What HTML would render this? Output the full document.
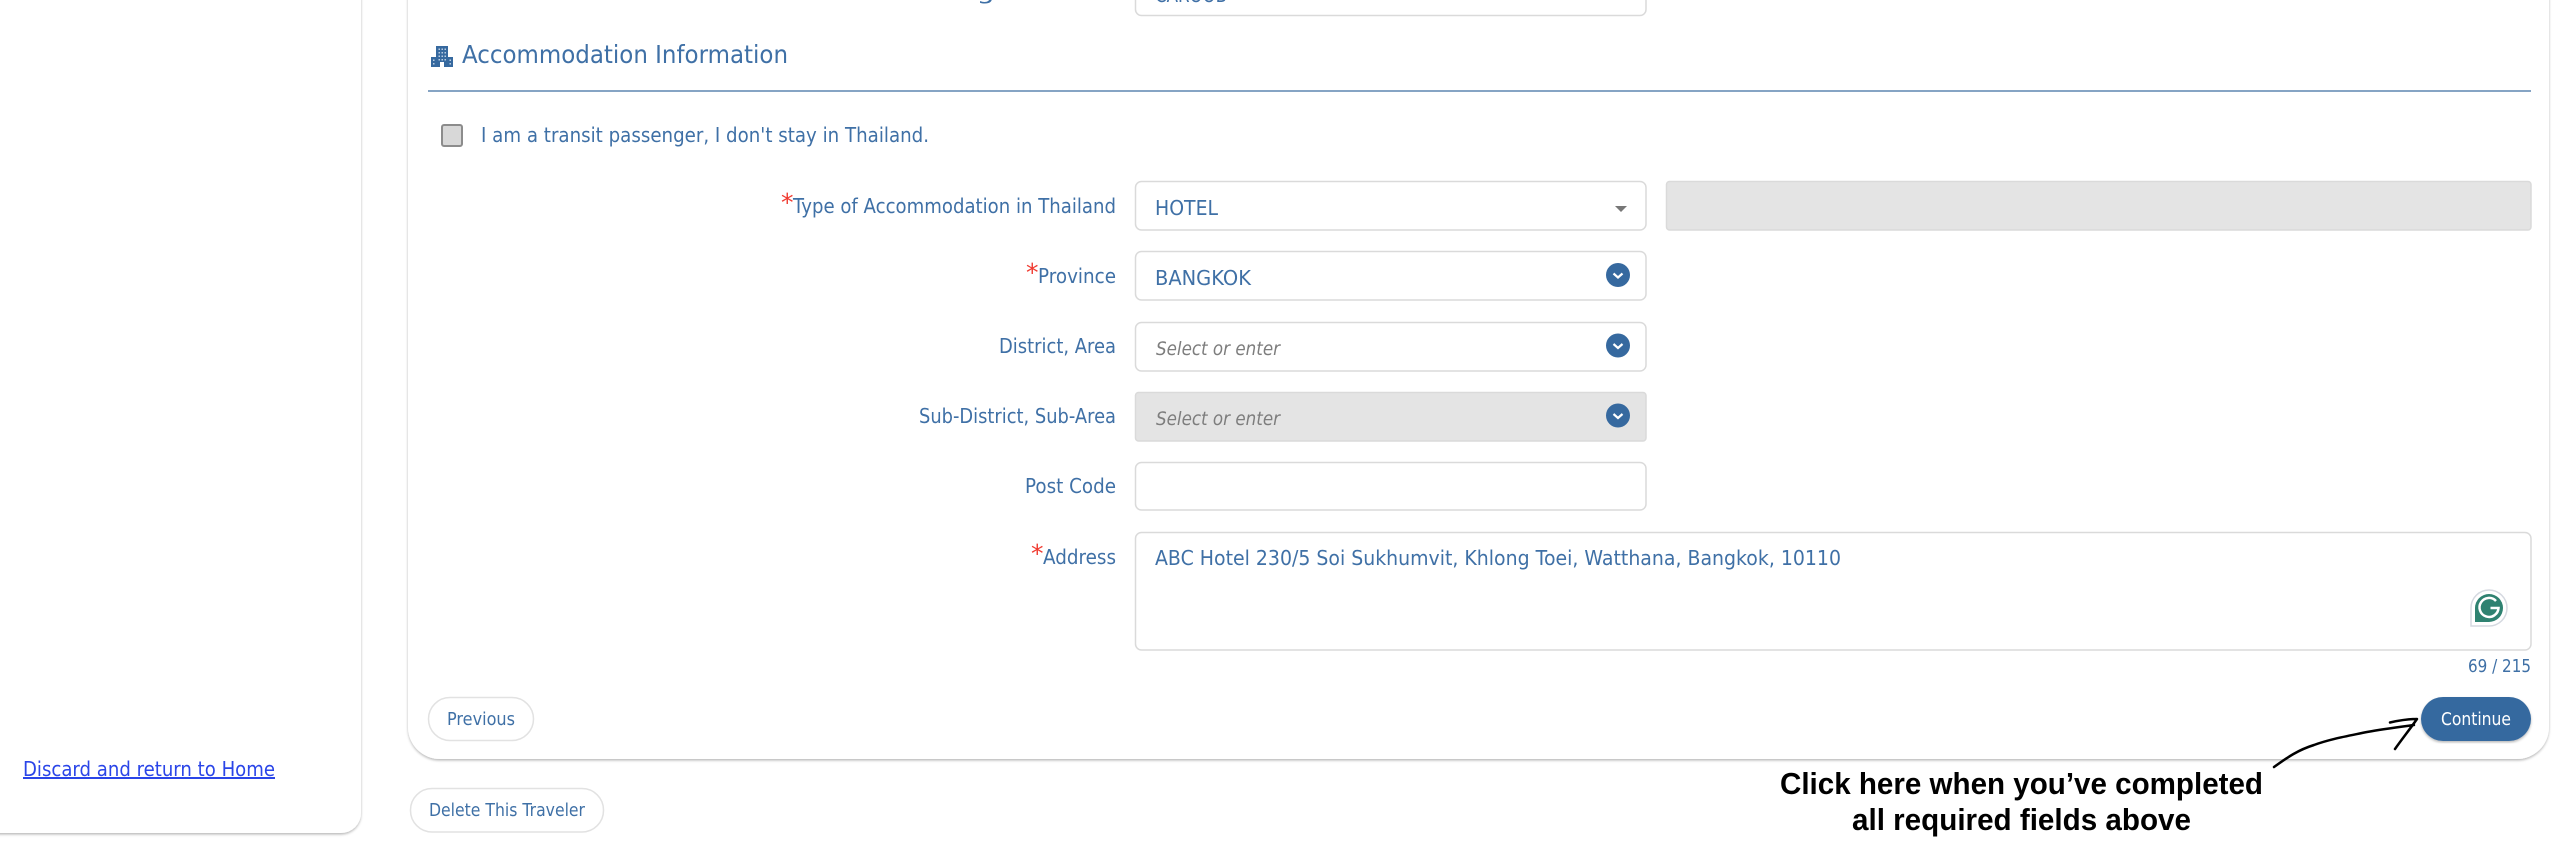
<!DOCTYPE html>
<html lang="en"><head><meta charset="utf-8"><title>Accommodation Information</title>
<style>
html,body{margin:0;padding:0;background:#fff;width:2560px;height:846px;overflow:hidden}
svg{display:block}
text{font-family:"DejaVu Sans",sans-serif;fill:#3f70a6;font-size:20px}
.b{fill:#fff;stroke:#dadada;stroke-width:1.500}
.g{fill:#e4e4e4;stroke:#dadada;stroke-width:1.500}
.s{fill:#7d7d7d;font-style:italic;font-size:19px}
.r{fill:#f03a30;font-size:25px}
.a{font-family:"Liberation Sans",Arial,sans-serif;font-weight:700;fill:#000;font-size:31px}
</style></head><body>
<svg xmlns="http://www.w3.org/2000/svg" width="2560" height="846" viewBox="0 0 2560 846">
<defs><filter id="sh" x="-5%" y="-5%" width="110%" height="110%"><feDropShadow dx="0" dy="1.500" stdDeviation="1.200" flood-color="#000" flood-opacity=".28"/></filter></defs>
<rect width="2560" height="846" fill="#fff"/>
<rect x="-40" y="-40" width="401" height="873" rx="20" fill="#fff" filter="url(#sh)"/>
<rect x="408" y="-40" width="2141" height="799" rx="32" fill="#fff" filter="url(#sh)"/>

<text x="943" y="-1" textLength="173" lengthAdjust="spacingAndGlyphs">ling Address</text>
<rect x="1135.500" y="-20" width="510.500" height="35.500" rx="6" class="b"/>
<text x="1155" y="2" textLength="72" lengthAdjust="spacingAndGlyphs">CAROOB</text>

<path fill="#36699f" d="M431 57h5V46h12v11h5v10h-9v-5h-4v5h-9z"/>
<path fill="#b9cde2" d="M438.500 48.500h1.500v1.500h-1.500zM441.500 48.500h1.500v1.500h-1.500zM444.500 48.500h1.500v1.500h-1.500zM438.500 52h1.500v1.500h-1.500zM441.500 52h1.500v1.500h-1.500zM444.500 52h1.500v1.500h-1.500zM438.500 55.500h1.500v1.500h-1.500zM441.500 55.500h1.500v1.500h-1.500zM444.500 55.500h1.500v1.500h-1.500zM438.500 59h1.500v1.500h-1.500zM441.500 59h1.500v1.500h-1.500zM444.500 59h1.500v1.500h-1.500zM433 59.500h1.500v1.500h-1.500zM433 63h1.500v1.500h-1.500zM449.500 59.500h1.500v1.500h-1.500zM449.500 63h1.500v1.500h-1.500z"/>
<text x="462" y="63" style="font-size:25px" textLength="326" lengthAdjust="spacingAndGlyphs">Accommodation Information</text>
<rect x="428" y="90" width="2103" height="2" fill="#86a4c4"/>

<rect x="442" y="125" width="20" height="21" rx="2" fill="#d8d8d8" stroke="#8c8c8c" stroke-width="2"/>
<text x="481" y="142" textLength="448" lengthAdjust="spacingAndGlyphs">I am a transit passenger, I don't stay in Thailand.</text>

<text class="r" x="781" y="211">*</text>
<text x="793" y="213" textLength="323" lengthAdjust="spacingAndGlyphs">Type of Accommodation in Thailand</text>
<rect x="1135.500" y="181.500" width="510.500" height="48.500" rx="6" class="b"/>
<text x="1155" y="215" textLength="63" lengthAdjust="spacingAndGlyphs">HOTEL</text>
<path d="M1615 206h12l-6 6z" fill="#777"/>
<rect x="1666.500" y="181.500" width="864.500" height="48.500" rx="3" class="g"/>

<text class="r" x="1026" y="281">*</text>
<text x="1038" y="283" textLength="78" lengthAdjust="spacingAndGlyphs">Province</text>
<rect x="1135.500" y="251.500" width="510.500" height="48.500" rx="6" class="b"/>
<text x="1155" y="285" textLength="96" lengthAdjust="spacingAndGlyphs">BANGKOK</text>
<circle cx="1618" cy="275" r="12" fill="#36699f"/><path d="M1613.500 273.500l4.500 4 4.500-4" fill="none" stroke="#fff" stroke-width="2.200"/>

<text x="999" y="353" textLength="117" lengthAdjust="spacingAndGlyphs">District, Area</text>
<rect x="1135.500" y="322.500" width="510.500" height="48.500" rx="6" class="b"/>
<text class="s" x="1156" y="355" textLength="124" lengthAdjust="spacingAndGlyphs">Select or enter</text>
<circle cx="1618" cy="345.500" r="12" fill="#36699f"/><path d="M1613.500 344l4.500 4 4.500-4" fill="none" stroke="#fff" stroke-width="2.200"/>

<text x="919" y="423" textLength="197" lengthAdjust="spacingAndGlyphs">Sub-District, Sub-Area</text>
<rect x="1135.500" y="392.500" width="510.500" height="48.500" rx="3" class="g"/>
<text class="s" x="1156" y="425" textLength="124" lengthAdjust="spacingAndGlyphs">Select or enter</text>
<circle cx="1618" cy="415.500" r="12" fill="#36699f"/><path d="M1613.500 414l4.500 4 4.500-4" fill="none" stroke="#fff" stroke-width="2.200"/>

<text x="1025" y="493" textLength="91" lengthAdjust="spacingAndGlyphs">Post Code</text>
<rect x="1135.500" y="462.500" width="510.500" height="47.500" rx="6" class="b"/>

<text class="r" x="1031" y="562">*</text>
<text x="1043" y="564" textLength="73" lengthAdjust="spacingAndGlyphs">Address</text>
<rect x="1135.500" y="532.500" width="1395.500" height="117.500" rx="6" class="b"/>
<text x="1155" y="565" textLength="686" lengthAdjust="spacingAndGlyphs">ABC Hotel 230/5 Soi Sukhumvit, Khlong Toei, Watthana, Bangkok, 10110</text>

<path d="M2471 626v-18a18 18 0 1 1 18 18z" fill="#fff" stroke="#d5d9e0" stroke-width="1.500"/>
<path d="M2475 622v-14a14 14 0 1 1 14 14z" fill="#2f8271"/>
<path d="M2496 601a9.500 9.500 0 1 0 2.500 7h-8" fill="none" stroke="#fff" stroke-width="2.500"/>

<text x="2468" y="672" style="font-size:18px" textLength="63" lengthAdjust="spacingAndGlyphs">69 / 215</text>

<rect x="428.500" y="697.500" width="105" height="43" rx="21.500" class="b" style="stroke:#e2e2e2"/>
<text x="447" y="725" style="font-size:18px" textLength="68" lengthAdjust="spacingAndGlyphs">Previous</text>
<rect x="2421" y="697" width="110" height="44" rx="22" fill="#36699f" filter="url(#sh)"/>
<text x="2441" y="725" style="font-size:18px;fill:#fff" textLength="70" lengthAdjust="spacingAndGlyphs">Continue</text>

<rect x="410.500" y="788.500" width="193" height="43.500" rx="21.500" class="b" style="stroke:#e2e2e2"/>
<text x="429" y="816" style="font-size:18px" textLength="156" lengthAdjust="spacingAndGlyphs">Delete This Traveler</text>

<text x="23" y="776" style="font-size:20px;fill:#2a45e8;text-decoration:underline" textLength="252" lengthAdjust="spacingAndGlyphs">Discard and return to Home</text>

<path d="M2274 767c14-10 24-17 40-22 16-6 34-9 53-13 16-3 32-5 47-7M2390 722.500c9-2 18-3.500 27-3.500-7 10-15 20-22 30" fill="none" stroke="#000" stroke-width="2.500" stroke-linecap="round" stroke-linejoin="round"/>

<text class="a" x="1780" y="794" textLength="483" lengthAdjust="spacingAndGlyphs">Click here when you’ve completed</text>
<text class="a" x="1852" y="830" textLength="339" lengthAdjust="spacingAndGlyphs">all required fields above</text>
</svg>
</body></html>
